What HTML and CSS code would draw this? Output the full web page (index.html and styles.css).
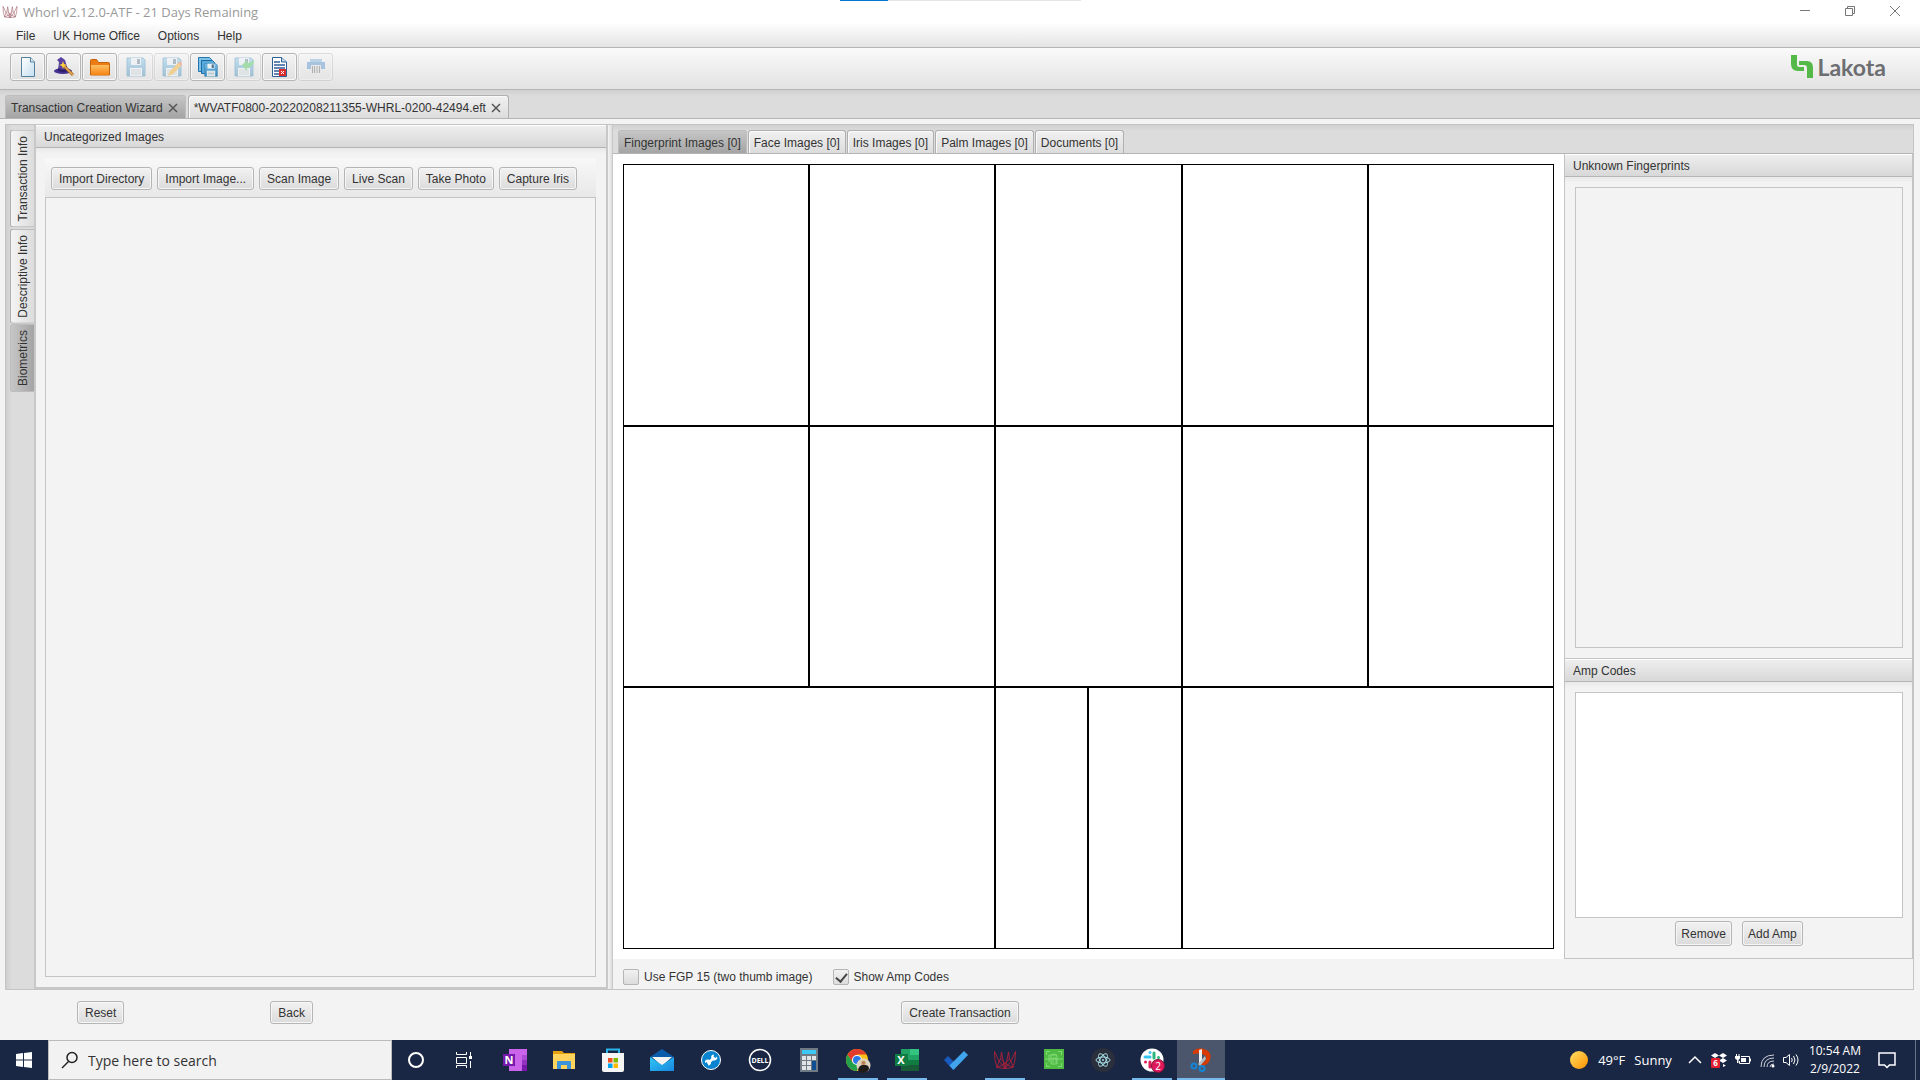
FILE: index.html
```html
<!DOCTYPE html>
<html lang="en">
<head>
<meta charset="utf-8">
<title>Whorl v2.12.0-ATF - 21 Days Remaining</title>
<link rel="stylesheet" href="styles.css">
</head>
<body>
<svg class="defs" aria-hidden="true">
  <defs>
    <linearGradient id="paper" x1="0" y1="0" x2="1" y2="1"><stop offset="0" stop-color="#fff"/><stop offset="1" stop-color="#c4def0"/></linearGradient>
    <linearGradient id="orange" x1="0" y1="0" x2="0" y2="1"><stop offset="0" stop-color="#ffc063"/><stop offset="1" stop-color="#f58312"/></linearGradient>
    <linearGradient id="disk" x1="0" y1="0" x2="0" y2="1"><stop offset="0" stop-color="#7cc0ea"/><stop offset="1" stop-color="#2f83b8"/></linearGradient>
    <linearGradient id="sun" x1="0" y1="0" x2="1" y2="1"><stop offset="0" stop-color="#ffe066"/><stop offset="1" stop-color="#ff9100"/></linearGradient>
    <linearGradient id="mailg" x1="0" y1="0" x2="1" y2="1"><stop offset="0" stop-color="#33c6f4"/><stop offset="1" stop-color="#1688e0"/></linearGradient>
    <symbol id="floppy" viewBox="0 0 20 20">
      <path d="M1 1h16l2 2v16H1z" fill="url(#disk)" stroke="#3e86b5"/>
      <path d="M5 1h10v7H5z" fill="#e9f1f6"/><path d="M11 2h3v5h-3z" fill="#4c6d85"/>
      <path d="M4 11h12v8H4z" fill="#f6f8f9"/><path d="M5 13h10M5 15h10M5 17h10" stroke="#a5b4bd"/>
    </symbol>
    <symbol id="web" viewBox="0 0 24 20">
      <path d="M1.500 1.500L2 10l2 7.500 8 1 8-1L22 10l.5-8.500M1.500 1.500L6 11l6 7.500L18 11l4.500-9.500M8.500 2L7.500 9 12 13.500 16.500 9l-1-7M8.500 2L10 10l2 8.500L14 10l1.500-8M4 17.500L6 11l1.500-2M20 17.500L18 11l-1.500-2M4 17.500l8-4 8 4" fill="none" stroke="currentColor" stroke-width=".8"/>
    </symbol>
  </defs>
</svg>

<header class="titlebar">
  <svg class="app-icon" viewBox="0 0 24 20"><use href="#web"/></svg>
  <h1>Whorl v2.12.0-ATF - 21 Days Remaining</h1>
  <div class="window-buttons">
    <button aria-label="Minimize"><svg width="12" height="12"><path d="M1 5.500h10" stroke="#777"/></svg></button>
    <button aria-label="Restore"><svg width="12" height="12"><path d="M1.500 3.500h7v7h-7zM3.500 3v-1.500h7v7h-1.500" fill="none" stroke="#777"/></svg></button>
    <button aria-label="Close"><svg width="12" height="12"><path d="M1 1l10 10M11 1L1 11" stroke="#777"/></svg></button>
  </div>
  <div class="progress"><span></span></div>
</header>

<nav class="menubar">
  <button>File</button><button>UK Home Office</button><button>Options</button><button>Help</button>
</nav>

<div class="toolbar">
  <button aria-label="New"><svg viewBox="0 0 20 20"><path d="M3.500.5h9l4 4.500v14.500h-13z" fill="url(#paper)" stroke="#55819e"/><path d="M12.500.5V5h4" fill="#dbeaf4" stroke="#55819e"/></svg></button>
  <button aria-label="Wizard"><svg viewBox="0 0 20 20"><ellipse cx="9" cy="14" rx="9" ry="3" fill="#43308f"/><path d="M4 13L5 5 3 3l4-3 4 3 3 10q-5 3-10 0" fill="#57409f"/><path d="M4 11q5 3 9 0l1 3q-5 2-10 0z" fill="#2d1d6b"/><path d="M9 8l10 10" stroke="#a5641c" stroke-width="3"/><path d="M9 8l10 10" stroke="#e5ad57" stroke-width="1.500"/><path d="M9 4l1 3 3 1-3 1-1 3-1-3-3-1 3-1z" fill="#ffd23a"/></svg></button>
  <button aria-label="Open"><svg viewBox="0 0 20 20"><path d="M.5 18V3.500q0-1 1-1h5l2 3h10q1 0 1 1V18z" fill="#ed7d12" stroke="#c3620d"/><path d="M1 8h18v10H1z" fill="url(#orange)"/></svg></button>
  <button aria-label="Save" disabled><svg viewBox="0 0 20 20"><use href="#floppy"/></svg></button>
  <button aria-label="Save as" disabled><svg viewBox="0 0 20 20"><use href="#floppy"/><path d="M6 19l2-5L17 5l3 3-9 9z" fill="#f5a30a"/><path d="M16 6l2-2 3 3-2 2z" fill="#e06a45"/></svg></button>
  <button aria-label="Save all"><svg viewBox="0 0 20 20"><path d="M.5.5h11l2 2v12H.5z" fill="#7ec1e6" stroke="#2377ae"/><path d="M3.500 3.500h11l2 2v11h-13z" fill="#58aadb" stroke="#1b6ca4"/><use href="#floppy" x="6" y="6" width="14" height="14"/></svg></button>
  <button aria-label="Revert" disabled><svg viewBox="0 0 20 20"><use href="#floppy"/><path d="M8 8l5-5v3q5 0 7-4 0 8-7 9v3z" fill="#34c042"/></svg></button>
  <button aria-label="Close file"><svg viewBox="0 0 20 20"><path d="M2.500.5h9l5 4.500v14.500h-14z" fill="#fff" stroke="#2c5f93"/><path d="M11.500.5V5h5" fill="#bcd8ee" stroke="#2c5f93"/><path d="M4 5h6M4 8h11M4 11h11M4 14h5M4 17h5" stroke="#315c9a" stroke-width="1.500"/><path d="M9 12h7v7H9z" fill="#dd2d2d"/><path d="M11 14l3 3M14 14l-3 3" stroke="#fff"/></svg></button>
  <button aria-label="Print" disabled><svg viewBox="0 0 20 20"><path d="M4 2h12v4H4z" fill="#6ea5d8"/><path d="M1 5h18v7H1z" fill="#3a82c5"/><path d="M5 8h10v8H5z" fill="#ddd"/><path d="M6.500 9v7M8.500 9v7M11 9v7M13.500 9v7" stroke="#555"/></svg></button>
  <a class="brand" href="#">
    <svg viewBox="0 0 22 23"><path d="M0 0h6v10q0 2 2 2h5v4H7q-7 0-7-7z" fill="#54b948"/><path d="M8 6h8q6 0 6 7v10h-6V13q0-3-3-3H8z" fill="#54b948"/></svg>
    <span>Lakota</span>
  </a>
</div>

<div class="file-tabs" role="tablist">
  <div class="tab selected"><button role="tab">Transaction Creation Wizard</button><button class="close" aria-label="Close tab"><svg viewBox="0 0 8 8"><path d="M0 0l8 8M8 0L0 8"/></svg></button></div>
  <div class="tab"><button role="tab">*WVATF0800-20220208211355-WHRL-0200-42494.eft</button><button class="close" aria-label="Close tab"><svg viewBox="0 0 8 8"><path d="M0 0l8 8M8 0L0 8"/></svg></button></div>
</div>

<main class="workspace">
  <div class="side-tabs" role="tablist">
    <button role="tab">Transaction Info</button>
    <button role="tab">Descriptive Info</button>
    <button role="tab" class="selected">Biometrics</button>
  </div>

  <section class="uncategorized">
    <h2 class="pane-title">Uncategorized Images</h2>
    <div class="pane-body">
      <div class="actions">
        <button class="btn">Import Directory</button><button class="btn">Import Image...</button><button class="btn">Scan Image</button><button class="btn">Live Scan</button><button class="btn">Take Photo</button><button class="btn">Capture Iris</button>
      </div>
      <div class="list"></div>
    </div>
  </section>

  <div class="splitter"></div>

  <section class="biometrics">
    <div class="image-tabs" role="tablist">
      <button role="tab" class="selected">Fingerprint Images [0]</button><button role="tab">Face Images [0]</button><button role="tab">Iris Images [0]</button><button role="tab">Palm Images [0]</button><button role="tab">Documents [0]</button>
    </div>
    <div class="prints">
      <div class="card-area">
        <div class="card">
          <div></div><div></div><div></div><div></div><div></div>
          <div></div><div></div><div></div><div></div><div></div>
          <div class="slap"></div><div class="thumb"></div><div class="thumb"></div><div class="slap"></div>
        </div>
      </div>
      <aside class="details">
        <section class="unknown">
          <h2 class="pane-title">Unknown Fingerprints</h2>
          <div class="pane-body"><div class="list"></div></div>
        </section>
        <section class="amp">
          <h2 class="pane-title">Amp Codes</h2>
          <div class="pane-body">
            <div class="list"></div>
            <div class="amp-actions"><button class="btn">Remove</button><button class="btn">Add Amp</button></div>
          </div>
        </section>
      </aside>
    </div>
    <div class="options">
      <label><input type="checkbox">Use FGP 15 (two thumb image)</label>
      <label><input type="checkbox" checked>Show Amp Codes</label>
    </div>
  </section>
</main>

<footer class="page-actions">
  <div><button class="btn">Reset</button><button class="btn">Back</button></div>
  <button class="btn">Create Transaction</button>
</footer>

<div class="taskbar">
  <button class="start" aria-label="Start"><svg width="16" height="16" viewBox="0 0 16 16" fill="#fff"><path d="M0 2l7-1v6.500H0zM8 1l8-1v7.500H8zM0 8.500h7V15l-7-1zM8 8.500h8V16l-8-1z"/></svg></button>
  <label class="search"><svg width="18" height="18" viewBox="0 0 18 18"><circle cx="11" cy="6.500" r="5" fill="none" stroke="#222" stroke-width="1.500"/><path d="M7.500 10.500L1 17" stroke="#222" stroke-width="1.500"/></svg><input type="text" placeholder="Type here to search" aria-label="Search"></label>
  <div class="system">
    <button aria-label="Cortana"><svg viewBox="0 0 24 24"><circle cx="12" cy="12" r="7" fill="none" stroke="#fff" stroke-width="2"/></svg></button>
    <button aria-label="Task view"><svg viewBox="0 0 24 24"><path d="M4.500 4v2.500h10V4M4.500 9.500h10v6h-10zM4.500 20v-2.500h10V20M18.500 4v4M18.500 13v7" fill="none" stroke="#fff"/><path d="M17 8h3v3h-3z" fill="#fff"/></svg></button>
  </div>
  <div class="apps">
    <button aria-label="OneNote"><svg viewBox="0 0 24 24"><path d="M6 1h18v22H6z" fill="#ca64ea"/><path d="M19 7h5v5h-5z" fill="#ae4bd5"/><path d="M19 12h5v5h-5z" fill="#9332bf"/><path d="M19 17h5v6h-5z" fill="#7719aa"/><path d="M0 6h12v12H0z" fill="#7719aa"/><text x="6" y="15.500" class="glyph">N</text></svg></button>
    <button aria-label="File Explorer"><svg viewBox="0 0 24 24"><path d="M1 3h9l2 2h11v16H1z" fill="#e5a00d"/><path d="M1 6h22v15H1z" fill="#ffd35c"/><path d="M5 21v-7q0-1 1-1h12q1 0 1 1v7h-4v-4H9v4z" fill="#3d95d9"/></svg></button>
    <button aria-label="Microsoft Store"><svg viewBox="0 0 24 24"><path d="M6 6V1.500h12V6" fill="none" stroke="#29b5ea" stroke-width="2"/><path d="M1 5h22v17q0 2-2 2H3q-2 0-2-2z" fill="#f5f5f5"/><path d="M7 10h4.500v4.500H7z" fill="#f25022"/><path d="M12.500 10H17v4.500h-4.500z" fill="#7fba00"/><path d="M7 15.500h4.500V20H7z" fill="#00a4ef"/><path d="M12.500 15.500H17V20h-4.500z" fill="#ffb900"/></svg></button>
    <button aria-label="Mail"><svg viewBox="0 0 24 24"><path d="M0 9l12-8 12 8-12 8z" fill="#0a5cab"/><path d="M2 9h20l-10 9z" fill="#f3f3f3"/><path d="M0 9l12 8 12-8v14H0z" fill="url(#mailg)"/></svg></button>
    <button aria-label="Support"><svg viewBox="0 0 24 24"><circle cx="12" cy="12" r="9.500" fill="#0a84d0" stroke="#fff"/><path d="M8.500 15.500l7-6" stroke="#fff" stroke-width="2.500"/><path d="M18 8.500A3 3 0 1 1 15 6.500L14.500 9l2 1zM6 15A3 3 0 1 1 9 17.500L9.500 15l-2-1z" fill="#fff"/></svg></button>
    <button aria-label="Dell"><svg viewBox="0 0 24 24"><circle cx="12" cy="12" r="10.500" fill="none" stroke="#fff" stroke-width="1.500"/><text x="12" y="15" class="glyph small">DELL</text></svg></button>
    <button aria-label="Calculator"><svg viewBox="0 0 24 24"><path d="M3 0h18v24H3z" fill="#6f7a85"/><path d="M5 2h14v4H5z" fill="#3cc8f4"/><path d="M5 8h4v4H5zM10 8h4v4h-4zM15 8h4v4h-4zM5 13h4v4H5zM10 13h4v4h-4zM5 18h4v4H5zM10 18h4v4h-4z" fill="#e1e4e7"/><path d="M15 13h4v9h-4z" fill="#104e94"/></svg></button>
    <button aria-label="Chrome" class="running"><svg viewBox="0 0 24 24"><circle cx="11" cy="12" r="11" fill="#fbc116"/><path d="M1.500 6.500A11 11 0 0 1 20.500 6.500H11L6.500 14.500z" fill="#e33b2e"/><path d="M1.500 6.500A11 11 0 0 0 10.500 23L15.500 14.500H6.500z" fill="#22a04b"/><circle cx="11" cy="12" r="5" fill="#fff"/><circle cx="11" cy="12" r="4" fill="#2979e8"/><circle cx="17.500" cy="17.500" r="7" fill="#ddd3c3"/><path d="M12 22q1-5 5-5h2q4 0 4 4-2 4-6 4t-5-3" fill="#1f1b1b"/><path d="M15 17q-1-5 2.500-5t2.500 5z" fill="#e0c48f"/><circle cx="17.500" cy="15" r="2" fill="#b68260"/></svg></button>
    <button aria-label="Excel" class="running"><svg viewBox="0 0 24 24"><path d="M6 1h18v22H6z" fill="#21a366"/><path d="M15 1h9v6h-9z" fill="#33c481"/><path d="M6 12h9v11H6zM15 12h9v5h-9z" fill="#107c41"/><path d="M6 17h18v6H6z" fill="#185c37"/><path d="M0 6h13v12H0z" fill="#107c41"/><text x="6" y="16" class="glyph">X</text></svg></button>
    <button aria-label="To Do"><svg viewBox="0 0 24 24"><path d="M0 12l4-4 8 8-3 6z" fill="#185abd"/><path d="M5.500 17.500L20 3l4 4L9.500 22z" fill="#41a5ee"/></svg></button>
    <button aria-label="Whorl" class="running crimson"><svg viewBox="0 0 24 24"><use href="#web" y="2" width="24" height="20"/></svg></button>
    <button aria-label="Scanner"><svg viewBox="0 0 24 24"><path d="M2 1h20v20H2z" fill="#4fbb43"/><path d="M4.500 7V3.500H8M16 3.500h3.500V7M4.500 15v3.500H8M16 18.500h3.500V15M3 11h18M9 16V8q3-4 6 0v8zM11 15v-5h3v5M7 14V7h8" fill="none" stroke="#8fe084" stroke-width=".8"/></svg></button>
    <button aria-label="Electron"><svg viewBox="0 0 24 24"><circle cx="12" cy="12" r="12" fill="#2b2e3b"/><g fill="none" stroke="#a8dfe4"><ellipse cx="12" cy="12" rx="7" ry="3"/><ellipse cx="12" cy="12" rx="7" ry="3" transform="rotate(60 12 12)"/><ellipse cx="12" cy="12" rx="7" ry="3" transform="rotate(120 12 12)"/></g><circle cx="12" cy="12" r="1" fill="#a8dfe4"/></svg></button>
    <button aria-label="Slack" class="running"><svg viewBox="0 0 24 24"><circle cx="12" cy="12" r="11.500" fill="#fff"/><g stroke-width="3" stroke-linecap="round"><path d="M5 9h5M10 4.500v0" stroke="#36c5f0"/><path d="M14 5v5M18.500 9.500v0" stroke="#2eb67d"/><path d="M14 14h5M14 18v0" stroke="#ecb22e"/><path d="M10 14v5M5.500 14v0" stroke="#e01e5a"/></g><circle cx="18" cy="18" r="6.500" fill="#e0195d" stroke="#7a1238"/><text x="18" y="21.500" class="glyph badge">2</text></svg></button>
    <button aria-label="Snip" class="running active"><svg viewBox="0 0 24 24"><path d="M4 3Q9-1 15 1q9 3 6 11-2 5-8 6-2-1-2-2 7-2 6-7-2-5-13-3z" fill="#d83b01"/><path d="M10 2l3-1v15h-3z" fill="#eee"/><path d="M16 8l1 3-6 7-2-2z" fill="#b9bdc2"/><g fill="none" stroke="#1385d6" stroke-width="2"><circle cx="5" cy="18" r="2.500"/><circle cx="13" cy="20.500" r="2.500"/></g></svg></button>
  </div>
  <div class="tray">
    <button class="weather"><svg width="20" height="20"><circle cx="10" cy="10" r="9" fill="url(#sun)"/></svg><span>49°F</span><span>Sunny</span></button>
    <div class="tray-icons">
    <button aria-label="Show hidden icons"><svg viewBox="0 0 16 16"><path d="M2 11l6-6 6 6" fill="none" stroke="#fff" stroke-width="1.500"/></svg></button>
    <button aria-label="Dropbox"><svg viewBox="0 0 16 16"><path d="M4 1l4 2.500L4 6 0 3.500zM12 1l4 2.500L12 6 8 3.500zM12 6l4 2.500-4 2.500-4-2.500zM12 12l3 1.500-3 1.500z" fill="#fff"/><rect y="6" width="9" height="10" rx="1" fill="#e01e2d"/><text x="4.500" y="14" class="glyph tiny">6</text></svg></button>
    <button aria-label="Battery"><svg viewBox="0 0 16 16"><path d="M6 4.500h8.500v7H4.500V9M15.500 6.500v3" fill="none" stroke="#fff"/><path d="M6 6h5v4H6zM0 4h5v2.500L3.500 8V11H2V8L0 6.500zM1 2h1v2H1zM3.500 2h1v2h-1z" fill="#fff"/></svg></button>
    <button aria-label="Wi-Fi"><svg viewBox="0 0 16 16"><path d="M2 15Q2 3 15 3M5 15Q5 6 15 6M8 15Q8 9 15 9M11 15q0-3 4-3" fill="none" stroke="#ccd0d8"/><circle cx="14" cy="14" r="1.500" fill="#fff"/></svg></button>
    <button aria-label="Volume"><svg viewBox="0 0 16 16"><path d="M.5 5.500H3L6.500 2.500v11L3 10.500H.5zM8.500 6q1.500 2 0 4M10.500 4q3 4 0 8M13 2.500q4 5.500 0 11" fill="none" stroke="#fff"/></svg></button>
    </div>
    <button class="clock"><span>10:54 AM</span><span>2/9/2022</span></button>
    <button class="notify" aria-label="Notifications"><svg width="18" height="18" viewBox="0 0 18 18"><path d="M1 2h16v12h-5.500L9 16.500 6.500 14H1z" fill="none" stroke="#fff" stroke-width="1.500"/></svg></button>
  </div>
</div>
</body>
</html>
```
FILE: styles.css
```css
* { box-sizing: border-box; }
body {
  margin: 0;
  min-height: 100vh;
  display: flex;
  flex-direction: column;
  background: #f3f3f3;
  color: #333;
  font: 12px/16px "Liberation Sans", Arial, sans-serif;
}
button { font: inherit; color: inherit; border: 0; padding: 0; background: none; white-space: nowrap; }
svg { display: block; }
h1, h2 { margin: 0; font: inherit; }
.defs { position: absolute; width: 0; height: 0; }

.titlebar {
  position: relative;
  display: flex;
  align-items: center;
  gap: 5px;
  height: 24px;
  padding-left: 2px;
  background: #fff;
  color: #999;
  font-family: "Open Sans", "Noto Sans", sans-serif;
  font-size: 13px;
}
.app-icon { width: 16px; height: 14px; color: #97525c; }
.window-buttons { display: flex; gap: 33px; margin-left: auto; padding-right: 19px; padding-bottom: 3px; }
.progress { position: absolute; top: 0; left: 840px; width: 241px; height: 1px; background: #e5e5e5; }
.progress span { display: block; width: 48px; height: 1px; background: #0078d7; }

.menubar {
  display: flex;
  gap: 18px;
  height: 24px;
  padding: 0 16px;
  background: linear-gradient(#fdfdfd, #e4e4e4);
  border-bottom: 1px solid #b5b5b5;
}

.toolbar {
  display: flex;
  align-items: center;
  gap: 1px;
  height: 42px;
  padding: 0 34px 4px 10px;
  background: linear-gradient(#fafafa, #e2e2e2);
  border-bottom: 1px solid #b5b5b5;
}
.toolbar button {
  width: 35px;
  height: 28px;
  padding: 3px 7px;
  border: 1px solid #b5b5b5;
  border-radius: 3px;
  background: linear-gradient(#f4f4f4, #e0e0e0);
  box-shadow: inset 0 0 0 1px #f8f8f8;
}
.toolbar button svg { width: 20px; height: 20px; }
.toolbar button:disabled { opacity: .4; }
.brand {
  display: flex;
  align-items: center;
  gap: 4px;
  margin-left: auto;
  color: #6d6e71;
  text-decoration: none;
  font: bold 23px/24px Lato, sans-serif;
}
.brand svg { width: 22px; height: 23px; }

.file-tabs, .image-tabs {
  display: flex;
  align-items: flex-end;
  height: 29px;
  background: linear-gradient(#d0d0d0, #dcdcdc 6px);
  border-bottom: 1px solid #b5b5b5;
}
.file-tabs { gap: 2px; padding-left: 5px; }
.tab, .image-tabs button {
  display: flex;
  align-items: center;
  height: 23px;
  padding: 2px 5px 0;
  border: 1px solid #b0b0b0;
  border-bottom: 0;
  border-radius: 3px 3px 0 0;
  background: linear-gradient(#f1f1f1, #dcdcdc);
  box-shadow: inset 1px 1px 0 #fafafa;
}
.tab { gap: 6px; padding-right: 8px; }
.tab .close svg { width: 8px; height: 8px; stroke: #555; stroke-width: 1.500; overflow: visible; }
.tab.selected, .image-tabs .selected {
  background: linear-gradient(#c6c6c6, #a4a4a4);
  border-color: #bdbdbd;
  box-shadow: none;
}

.workspace {
  flex: 1;
  display: flex;
  margin: 5px 6px 0 5px;
  border: 1px solid #c4c4c4;
}
.side-tabs {
  display: flex;
  flex-direction: column;
  align-items: flex-end;
  gap: 1px;
  width: 28px;
  padding-top: 5px;
  background: linear-gradient(90deg, #cfcfcf, #dcdcdc 6px);
}
.side-tabs button {
  writing-mode: vertical-rl;
  transform: rotate(180deg);
  width: 24px;
  padding: 5px 3px;
  border: 1px solid #b0b0b0;
  border-left: 0;
  border-radius: 0 3px 3px 0;
  background: linear-gradient(270deg, #f4f4f4, #dcdcdc);
}
.side-tabs .selected { background: linear-gradient(270deg, #c6c6c6, #a4a4a4); border-color: #bdbdbd; }

.pane-title {
  height: 23px;
  padding: 4px 8px 2px;
  background: linear-gradient(#efefef, #d8d8d8);
  border-bottom: 1px solid #b5b5b5;
  box-shadow: inset 0 1px 0 #fff;
}
.pane-body { flex: 1; display: flex; flex-direction: column; background: linear-gradient(#e9e9e9, #f3f3f3 6px); }
.list { flex: 1; border: 1px solid #c4c4c4; background: #f3f3f3; }

.uncategorized {
  flex: 0 1 574px;
  display: flex;
  flex-direction: column;
  border: 2px solid #c8c8c8;
  border-top-width: 0;
}
.uncategorized .pane-body { padding: 10px 10px 10px 9px; }
.actions { display: flex; gap: 5px; height: 39px; padding: 9px 6px; background: linear-gradient(#f8f8f8, #e8e8e8); }
.btn {
  height: 23px;
  padding: 0 7px;
  border: 1px solid #b5b5b5;
  border-radius: 3px;
  background: linear-gradient(#f2f2f2, #dbdbdb);
  box-shadow: inset 0 0 0 1px #f6f6f6;
}
.splitter { width: 5px; background: linear-gradient(90deg, #f4f4f4, #dcdcdc); border-right: 1px solid #c8c8c8; }

.biometrics { flex: 1; display: flex; flex-direction: column; min-width: 0; }
.image-tabs { gap: 1px; padding-left: 5px; }
.prints { flex: 1; display: flex; background: #fff; }
.card-area { flex: 1; display: flex; padding: 10px; }
.card {
  flex: 1;
  display: grid;
  grid-template-columns: repeat(10, 1fr);
  grid-template-rows: repeat(3, 1fr);
}
.card div { grid-column: span 2; border: 1px solid #000; }
.card .slap { grid-column: span 4; }
.card .thumb { grid-column: span 1; }

.details { width: 349px; display: flex; flex-direction: column; border: 1px solid #c4c4c4; border-top: 0; }
.details section { display: flex; flex-direction: column; }
.unknown { flex: 505; }
.amp { flex: 299; border-top: 1px solid #c4c4c4; }
.details .pane-body { padding: 10px 9px 10px 10px; }
.amp .list { background: #fff; }
.amp-actions { display: flex; justify-content: center; gap: 10px; padding: 3px 0 2px; }
.amp-actions .btn { height: 25px; padding: 0 5px; }

.options { display: flex; align-items: center; gap: 20px; height: 30px; padding: 6px 10px 0; background: #f3f3f3; }
.options label { display: flex; align-items: center; gap: 5px; }
.options input {
  appearance: none;
  width: 16px;
  height: 16px;
  margin: 0;
  border: 1px solid #b5b5b5;
  border-radius: 2px;
  background: linear-gradient(#f2f2f2, #dcdcdc);
}
.options input:checked::after {
  content: "";
  display: block;
  width: 5px;
  height: 9px;
  margin: 1px 4px;
  border: solid #444;
  border-width: 0 2px 2px 0;
  transform: rotate(40deg);
}

.page-actions {
  display: grid;
  grid-template-columns: 1fr auto 1fr;
  height: 50px;
  padding-top: 11px;
  align-items: start;
}
.page-actions div { display: flex; gap: 146px; padding-left: 77px; }

.taskbar {
  display: flex;
  height: 40px;
  background: #1a2744;
  color: #fff;
  font: 14px/20px "Open Sans", "Noto Sans", sans-serif;
}
.start { width: 48px; display: grid; place-items: center; }
.search { width: 344px; display: flex; align-items: center; gap: 9px; padding-left: 12px; background: #f2f2f2; border: 1px solid #bbb; }
.search input { flex: 1; min-width: 0; border: 0; padding: 1px 0 0; background: none; font: inherit; }
.search input::placeholder { color: #333; opacity: 1; }
.system, .apps { display: flex; }
.apps { gap: 1px; margin-left: 3px; }
.system button, .apps button { width: 48px; display: grid; place-items: center; }
.system svg, .apps svg { width: 24px; height: 24px; overflow: visible; }
.apps .running { background: linear-gradient(#76b9ed, #76b9ed) bottom / 40px 2px no-repeat; }
.apps .active { background: linear-gradient(#76b9ed, #76b9ed) bottom / 48px 2px no-repeat, #4b566c; }
.crimson { color: #c11f38; }
.glyph { fill: #fff; font: bold 11px "Open Sans", sans-serif; text-anchor: middle; }
.glyph.small { font-size: 7px; }
.glyph.tiny { font-size: 8px; }
.glyph.badge { font-size: 10px; font-weight: 400; }
.tray { display: flex; align-items: center; margin-left: auto; }
.weather { display: flex; align-items: center; gap: 9px; font-size: 13px; }
.tray-icons { display: flex; gap: 8px; padding: 0 10px 0 15px; }
.tray-icons svg { width: 16px; height: 16px; }
.clock { display: flex; flex-direction: column; align-items: center; font-size: 12px; line-height: 18px; }
.notify { height: 40px; padding: 0 19px 0 17px; margin-right: 4px; border-right: 1px solid #6a7383; }
```
